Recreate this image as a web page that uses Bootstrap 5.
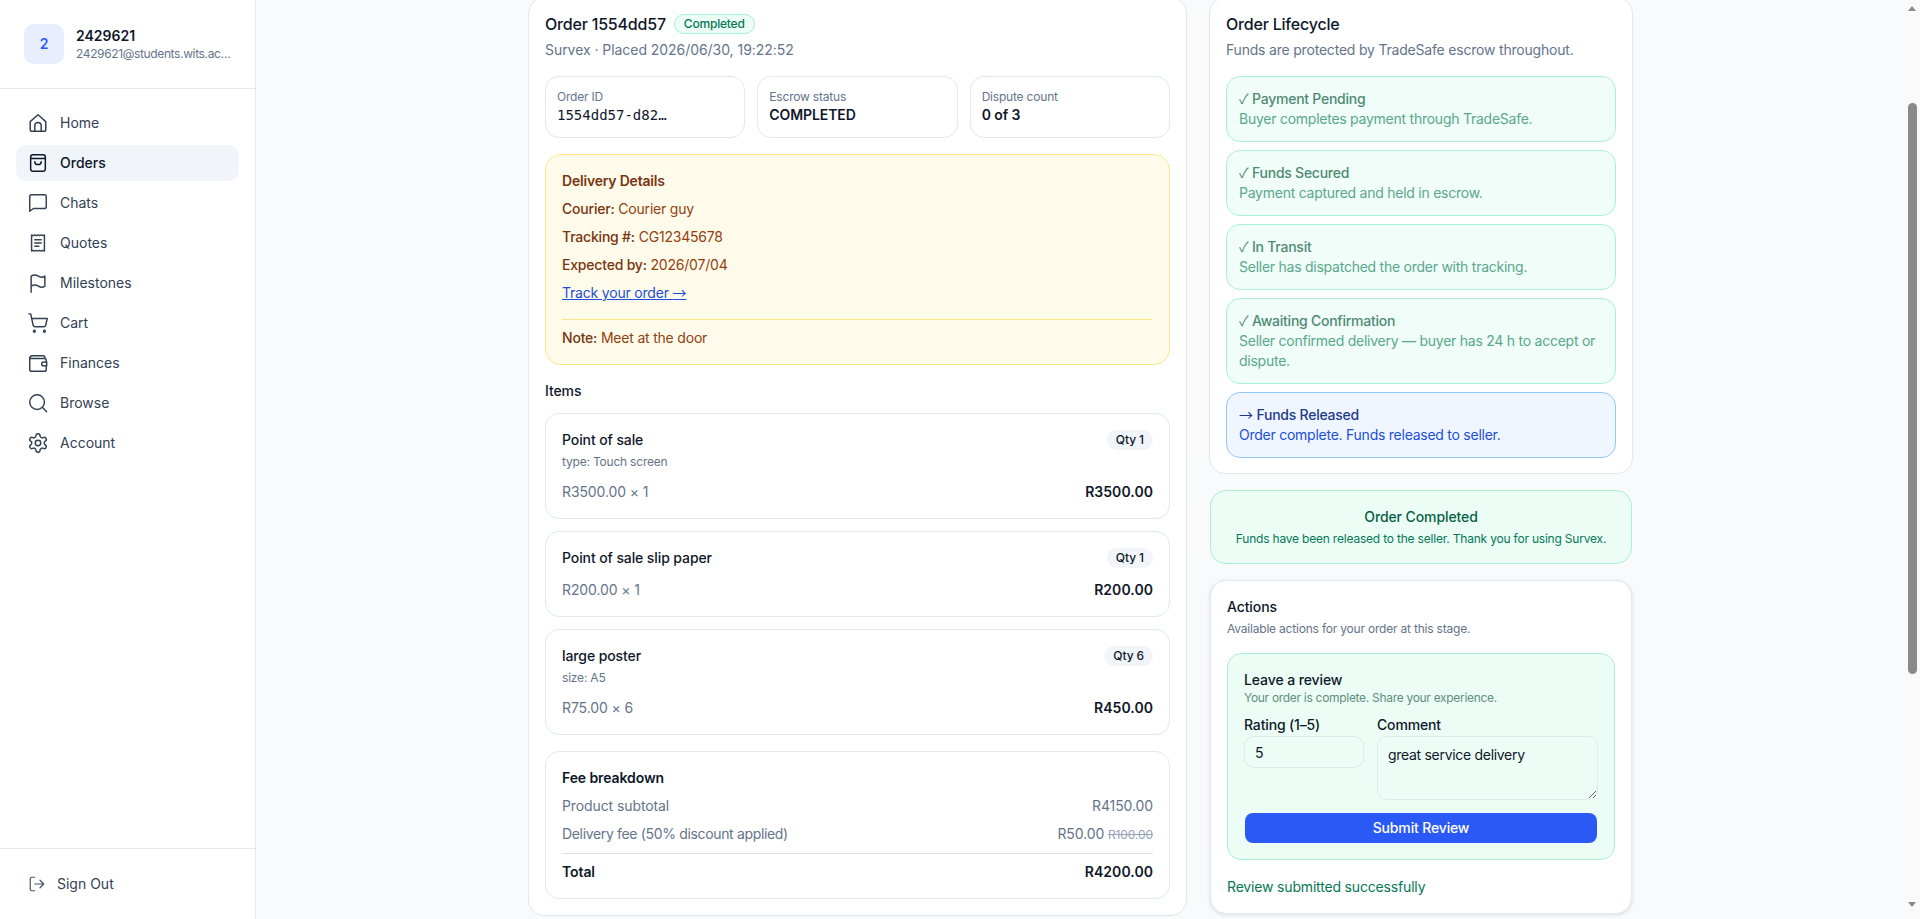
<!DOCTYPE html>
<html lang="en">
<head>
<meta charset="utf-8">
<title>Order 1554dd57</title>
<link rel="stylesheet" href="https://cdn.jsdelivr.net/npm/bootstrap@5.3.0/dist/css/bootstrap.min.css">
<style>
html,body{height:100%;overflow:hidden}
body{font-family:Inter,"Liberation Sans",sans-serif;font-size:14px;line-height:20px;color:#0f172a;background:#f8fafc}
.shell{height:919px}
.side{width:256px;flex:none;background:#fff;border-right:1px solid #e2e8f0}
.side-head{height:89px;padding:24px;border-bottom:1px solid #e2e8f0;gap:12px}
.avatar{width:40px;height:40px;flex:none;border-radius:10px;background:#e8eefe;color:#2b59f5;font-weight:600}
.uname{font-weight:600;line-height:20px;margin-top:2px}
.umail{font-size:12px;line-height:16px;color:#64748b;white-space:nowrap;letter-spacing:-.36px}
.side-nav{padding:16px;gap:4px}
.side-link{height:36px;padding:0 11px;gap:11px;border-radius:10px;color:#334155;text-decoration:none}
.side-link.on{background:#f1f5f9;color:#0f172a;font-weight:500}
.side-link svg{width:22px;height:22px;flex:none;fill:none;stroke:currentColor;stroke-width:1.6;stroke-linecap:round;stroke-linejoin:round}
.side-foot{height:71px;border-top:1px solid #e2e8f0;padding:0 28px;gap:11px;color:#334155}
.side-foot svg{width:18px;height:18px;fill:none;stroke:#475569;stroke-width:1.6;stroke-linecap:round;stroke-linejoin:round}
.pane{min-width:0}
.board{width:1105px;margin:-3px 0 0 272px;display:grid;grid-template-columns:659px 424px;gap:22px;align-items:start;letter-spacing:-.1px}
.panel{background:#fff;border:1px solid #e2e8f0;border-radius:16px;padding:16px}
.panel-tight{padding-bottom:15px}
.panel-lift{box-shadow:0 1px 4px rgba(15,23,42,.12)}
.inset{margin-left:1px;margin-right:1px}
.ttl{font-size:16px;font-weight:500;line-height:20px;letter-spacing:-.2px}
.muted{color:#64748b}
.sub14{line-height:20px;margin-top:6px}
.sub-a{letter-spacing:-.05px}
.sub-b{letter-spacing:-.2px}
.tiny{font-size:12px;line-height:16px;letter-spacing:-.2px}
.pill-ok{height:20px;padding:0 9px;border:1px solid #a7f3d0;background:#ecfdf5;color:#047857;border-radius:999px;font-size:12px;line-height:18px;font-weight:500;letter-spacing:-.2px}
.stats{display:grid;grid-template-columns:repeat(3,1fr);gap:12px;margin-top:16px}
.stat{border:1px solid #e2e8f0;border-radius:14px;padding:12px 11px}
.mono{font-family:"DejaVu Sans Mono","Liberation Mono",monospace;font-size:14px;letter-spacing:0}
.deliv{margin-top:16px;background:#fffbeb;border:1px solid #fde68a;border-radius:16px;padding:16px;color:#92400e;letter-spacing:-.2px}
.deliv b{font-weight:500;color:#78350f}
.deliv-h{font-weight:600;color:#78350f}
.deliv p{margin:8px 0 0}
.deliv a{color:#1d4ed8}
.deliv-note{margin-top:16px;padding-top:8px;border-top:1px solid #fde68a}
.arrow,.chk{font-family:"Noto Sans CJK SC","Liberation Sans",sans-serif;line-height:0;font-weight:400;letter-spacing:0}
.box{border:1px solid #e2e8f0;border-radius:14px;padding:16px}
.fw5{font-weight:500}
.fw6{font-weight:600}
.amt{font-weight:600;letter-spacing:.05px}
.qty{height:20px;padding:0 9px;background:#f1f5f9;border-radius:999px;font-size:12px;line-height:20px;font-weight:500;letter-spacing:-.1px}
.strike{font-size:12px;color:#94a3b8;text-decoration:line-through}
.tight-line{letter-spacing:-.34px}
.item-stack{gap:12px}
.price-row{margin-top:12px}
.step{border:1px solid #a7f3d0;background:#f0fdf8;border-radius:14px;padding:12px;color:#5aa78c;letter-spacing:-.25px}
.step-t{font-weight:500;color:#4f8a74;height:20px}
.step-now{border-color:#93c5fd;background:#eff6ff;color:#1d4ed8}
.step-now .step-t{color:#1e3a8a}
.done{background:#ecfdf5;border:1px solid #a7f3d0;border-radius:16px;padding:16px;color:#047857}
.done-t{color:#065f46;font-weight:500}
.review{margin-top:16px;background:#ecfdf5;border:1px solid #a7f3d0;border-radius:14px;padding:16px}
.review-sub{color:#5f8f80;letter-spacing:-.3px}
.fields{display:grid;grid-template-columns:120px 1fr;gap:13px;margin-top:9px}
.fld-label{display:block;margin-bottom:1px;font-weight:500;line-height:20px;letter-spacing:-.15px}
.fld{display:block;width:100%;background:transparent;border:1px solid #e2e8f0;border-radius:10px;padding:5px 10px;height:32px;font:inherit;letter-spacing:-.3px;color:#0f172a;outline:0}
textarea.fld{height:64px;padding:8px 10px}
.send{display:block;width:calc(100% - 2px);height:30px;padding:0;margin:13px 1px 0;background:#2b59f5;border:0;border-radius:8px;color:#fff;font-weight:500;line-height:30px;letter-spacing:-.15px}
.sent{color:#047857;margin-top:17px;letter-spacing:-.17px}
.sbar{width:15px;flex:none;background:#fafafa;height:919px}
.sb-up,.sb-dn{width:0;height:0;border-left:4.5px solid transparent;border-right:4.5px solid transparent;margin-left:3px}
.sb-up{border-bottom:5px solid #8a8a8a;margin-top:6px}
.sb-thumb{width:9px;height:571px;margin:92px 0 0 3px;background:#8a8a8a;border-radius:5px}
.sb-dn{border-top:5px solid #8a8a8a;margin-top:228px}
</style>
</head>
<body>
<div class="shell d-flex">
  <aside class="side d-flex flex-column">
    <div class="side-head d-flex">
      <div class="avatar d-flex align-items-center justify-content-center">2</div>
      <div>
        <div class="uname">2429621</div>
        <div class="umail">2429621@students.wits.ac…</div>
      </div>
    </div>
    <nav class="side-nav d-flex flex-column flex-grow-1">
      <a class="side-link d-flex align-items-center" href="#"><svg viewBox="0 0 24 24"><path d="M3.500 10.500 12 3l8.500 7.500V19a2 2 0 0 1-2 2h-13a2 2 0 0 1-2-2z"/><path d="M8.500 21v-6a3.500 3.500 0 0 1 7 0v6"/></svg>Home</a>
      <a class="side-link on d-flex align-items-center" href="#"><svg viewBox="0 0 24 24"><rect x="4" y="3" width="16" height="18" rx="2.500"/><path d="M4 7h16"/><path d="M8.500 10.500c0 2 1.600 3.200 3.500 3.200s3.500-1.200 3.500-3.200"/></svg>Orders</a>
      <a class="side-link d-flex align-items-center" href="#"><svg viewBox="0 0 24 24"><path d="M3 5a2 2 0 0 1 2-2h14a2 2 0 0 1 2 2v11a2 2 0 0 1-2 2H7l-4 3z"/></svg>Chats</a>
      <a class="side-link d-flex align-items-center" href="#"><svg viewBox="0 0 24 24"><path d="M5 3.200l1.750.8 1.750-.8 1.750.8 1.750-.8 1.750.8 1.750-.8 1.750.8 1.750-.8v17.600l-1.750-.8-1.750.8-1.750-.8-1.750.8-1.750-.8-1.750.8-1.750-.8-1.750.8z"/><path d="M8.500 8.500h7M8.500 12h7M8.500 15.500h4.500"/></svg>Quotes</a>
      <a class="side-link d-flex align-items-center" href="#"><svg viewBox="0 0 24 24"><path d="M4.500 22V4.500c3-2 5.700-1.500 8 0s5 1.500 7 0v11c-2 1.500-4.700 1.500-7 0s-5-2-8 0"/></svg>Milestones</a>
      <a class="side-link d-flex align-items-center" href="#"><svg viewBox="0 0 24 24"><circle cx="8" cy="21" r="1"/><circle cx="19" cy="21" r="1"/><path d="M2.050 2.050h2l2.660 12.420a2 2 0 0 0 2 1.580h9.780a2 2 0 0 0 1.950-1.570l1.650-7.430H5.120"/></svg>Cart</a>
      <a class="side-link d-flex align-items-center" href="#"><svg viewBox="0 0 24 24"><path d="M3 7a3 3 0 0 1 3-3h11.500a2 2 0 0 1 2 2v1"/><path d="M21 11V9a2 2 0 0 0-2-2H3v12a2 2 0 0 0 2 2h14a2 2 0 0 0 2-2v-4"/><path d="M21.500 11H18a2 2 0 0 0 0 4h3.500z"/></svg>Finances</a>
      <a class="side-link d-flex align-items-center" href="#"><svg viewBox="0 0 24 24"><circle cx="11" cy="11" r="8"/><path d="m21.500 21.500-4.800-4.800"/></svg>Browse</a>
      <a class="side-link d-flex align-items-center" href="#"><svg viewBox="0 0 24 24"><path d="M12.220 2h-.44a2 2 0 0 0-2 2v.18a2 2 0 0 1-1 1.730l-.43.250a2 2 0 0 1-2 0l-.15-.08a2 2 0 0 0-2.730.730l-.22.380a2 2 0 0 0 .73 2.730l.15.100a2 2 0 0 1 1 1.720v.510a2 2 0 0 1-1 1.740l-.15.090a2 2 0 0 0-.73 2.730l.22.380a2 2 0 0 0 2.730.730l.15-.08a2 2 0 0 1 2 0l.43.250a2 2 0 0 1 1 1.730V20a2 2 0 0 0 2 2h.44a2 2 0 0 0 2-2v-.18a2 2 0 0 1 1-1.730l.43-.25a2 2 0 0 1 2 0l.15.080a2 2 0 0 0 2.730-.73l.22-.39a2 2 0 0 0-.73-2.730l-.15-.08a2 2 0 0 1-1-1.740v-.5a2 2 0 0 1 1-1.740l.15-.09a2 2 0 0 0 .73-2.730l-.22-.38a2 2 0 0 0-2.730-.73l-.15.080a2 2 0 0 1-2 0l-.43-.25a2 2 0 0 1-1-1.730V4a2 2 0 0 0-2-2z"/><circle cx="12" cy="12" r="3"/></svg>Account</a>
    </nav>
    <div class="side-foot d-flex align-items-center"><svg viewBox="0 0 24 24"><path d="M9 21H5a2 2 0 0 1-2-2V5a2 2 0 0 1 2-2h4"/><path d="m16 17 5-5-5-5M21 12H9"/></svg>Sign Out</div>
  </aside>

  <main class="pane flex-grow-1 overflow-hidden">
    <div class="board">
      <section class="panel">
        <div class="d-flex align-items-center gap-2">
          <div class="ttl">Order 1554dd57</div>
          <span class="pill-ok">Completed</span>
        </div>
        <div class="sub14 sub-a muted">Survex · Placed 2026/06/30, 19:22:52</div>
        <div class="stats">
          <div class="stat"><div class="tiny muted">Order ID</div><div class="mono">1554dd57-d82…</div></div>
          <div class="stat"><div class="tiny muted">Escrow status</div><div class="fw6">COMPLETED</div></div>
          <div class="stat"><div class="tiny muted">Dispute count</div><div class="fw6">0 of 3</div></div>
        </div>
        <div class="deliv">
          <div class="deliv-h">Delivery Details</div>
          <p><b>Courier:</b> Courier guy</p>
          <p><b>Tracking #:</b> CG12345678</p>
          <p><b>Expected by:</b> 2026/07/04</p>
          <p><a href="#">Track your order <span class="arrow">→</span></a></p>
          <div class="deliv-note"><b>Note:</b> Meet at the door</div>
        </div>
        <div class="fw5 mt-3 mb-2 pb-1">Items</div>
        <div class="d-flex flex-column item-stack">
          <div class="box">
            <div class="d-flex justify-content-between"><span class="fw5">Point of sale</span><span class="qty">Qty 1</span></div>
            <div class="tiny muted mt-1">type: Touch screen</div>
            <div class="d-flex justify-content-between price-row"><span class="muted">R3500.00 × 1</span><span class="amt">R3500.00</span></div>
          </div>
          <div class="box">
            <div class="d-flex justify-content-between"><span class="fw5">Point of sale slip paper</span><span class="qty">Qty 1</span></div>
            <div class="d-flex justify-content-between price-row"><span class="muted">R200.00 × 1</span><span class="amt">R200.00</span></div>
          </div>
          <div class="box">
            <div class="d-flex justify-content-between"><span class="fw5">large poster</span><span class="qty">Qty 6</span></div>
            <div class="tiny muted mt-1">size: A5</div>
            <div class="d-flex justify-content-between price-row"><span class="muted">R75.00 × 6</span><span class="amt">R450.00</span></div>
          </div>
        </div>
        <div class="box mt-3">
          <div class="fw6">Fee breakdown</div>
          <div class="d-flex justify-content-between mt-2 muted"><span>Product subtotal</span><span>R4150.00</span></div>
          <div class="d-flex justify-content-between mt-2 muted"><span class="tight-line">Delivery fee (50% discount applied)</span><span>R50.00 <span class="strike">R100.00</span></span></div>
          <div class="d-flex justify-content-between mt-2 pt-2 border-top fw6"><span>Total</span><span class="amt">R4200.00</span></div>
        </div>
      </section>

      <div class="d-flex flex-column gap-3">
        <section class="panel panel-tight">
          <div class="ttl">Order Lifecycle</div>
          <div class="sub14 sub-b muted">Funds are protected by TradeSafe escrow throughout.</div>
          <div class="d-flex flex-column gap-2 mt-3">
            <div class="step"><div class="step-t"><span class="chk">✓</span> Payment Pending</div><div>Buyer completes payment through TradeSafe.</div></div>
            <div class="step"><div class="step-t"><span class="chk">✓</span> Funds Secured</div><div>Payment captured and held in escrow.</div></div>
            <div class="step"><div class="step-t"><span class="chk">✓</span> In Transit</div><div>Seller has dispatched the order with tracking.</div></div>
            <div class="step"><div class="step-t"><span class="chk">✓</span> Awaiting Confirmation</div><div>Seller confirmed delivery — buyer has 24 h to accept or dispute.</div></div>
            <div class="step step-now"><div class="step-t"><span class="arrow">→</span> Funds Released</div><div>Order complete. Funds released to seller.</div></div>
          </div>
        </section>
        <section class="done inset text-center">
          <div class="done-t">Order Completed</div>
          <div class="tiny mt-1">Funds have been released to the seller. Thank you for using Survex.</div>
        </section>
        <section class="panel panel-lift inset">
          <div class="fw5">Actions</div>
          <div class="tiny muted mt-1">Available actions for your order at this stage.</div>
          <div class="review">
            <div class="fw5">Leave a review</div>
            <div class="tiny review-sub">Your order is complete. Share your experience.</div>
            <div class="fields">
              <div><label class="fld-label" for="rt">Rating (1–5)</label><input id="rt" class="fld" value="5"></div>
              <div><label class="fld-label" for="cm">Comment</label><textarea id="cm" class="fld">great service delivery</textarea></div>
            </div>
            <button class="send" type="button">Submit Review</button>
          </div>
          <div class="sent">Review submitted successfully</div>
        </section>
      </div>
    </div>
  </main>

  <div class="sbar" aria-hidden="true">
    <div class="sb-up"></div>
    <div class="sb-thumb"></div>
    <div class="sb-dn"></div>
  </div>
</div>
<script src="https://cdn.jsdelivr.net/npm/bootstrap@5.3.0/dist/js/bootstrap.bundle.min.js"></script>
</body>
</html>
